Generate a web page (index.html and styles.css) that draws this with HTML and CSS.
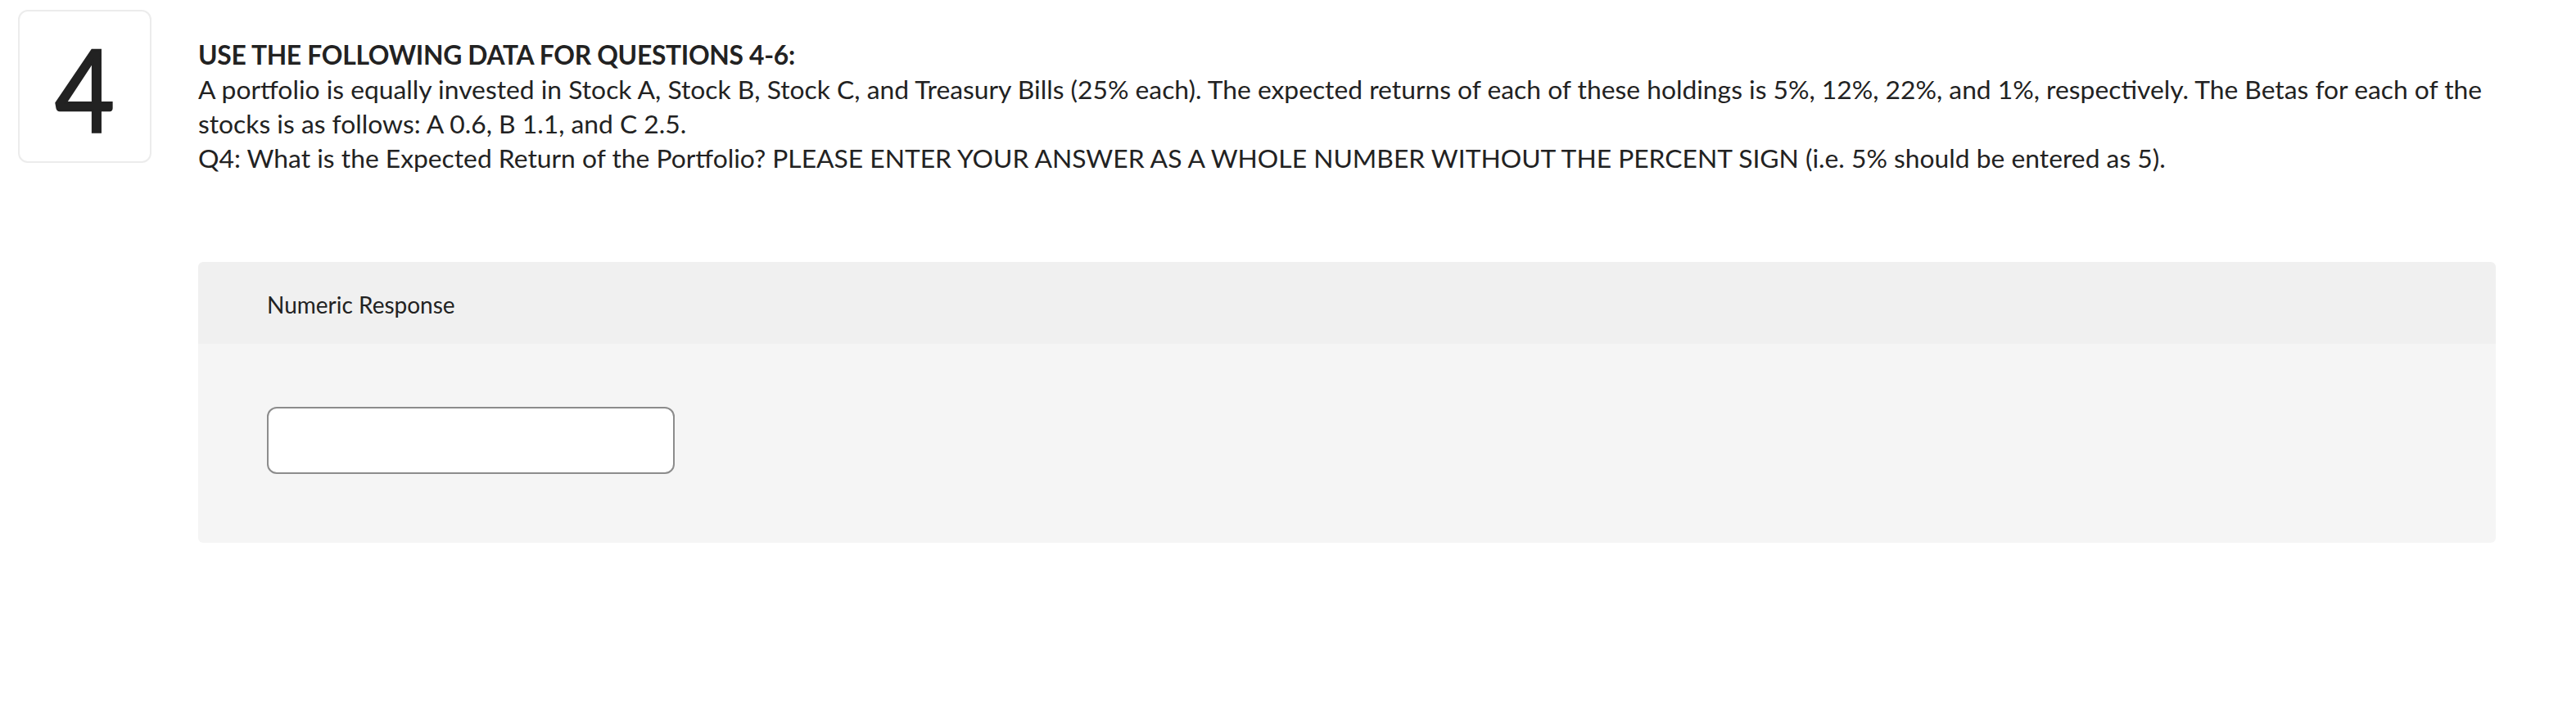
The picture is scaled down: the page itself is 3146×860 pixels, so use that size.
FILE: index.html
```html
<!DOCTYPE html>
<html lang="en">
<head>
<meta charset="utf-8">
<title>Question 4</title>
<link rel="stylesheet" href="styles.css">
</head>
<body>
<div class="question">
  <div class="qnum"><span>4</span></div>
  <div class="qmain">
    <div class="prompt">
      <div class="lead">USE THE FOLLOWING DATA FOR QUESTIONS 4-6:</div>
      <div class="para">A portfolio is equally invested in Stock A, Stock B, Stock C, and Treasury Bills (25% each). The expected returns of each of these holdings is 5%, 12%, 22%, and 1%, respectively. The Betas for each of the stocks is as follows: A 0.6, B 1.1, and C 2.5.</div>
      <div class="para">Q4: What is the Expected Return of the Portfolio? PLEASE ENTER YOUR ANSWER AS A WHOLE NUMBER WITHOUT THE PERCENT SIGN (i.e. 5% should be entered as 5).</div>
    </div>
    <div class="response">
      <div class="response-head">Numeric Response</div>
      <div class="response-body">
        <input class="answer" type="text" aria-label="Numeric Response">
      </div>
    </div>
  </div>
</div>
</body>
</html>
```
FILE: styles.css
```css
html, body {
  margin: 0;
  padding: 0;
  background: #ffffff;
}
body {
  font-family: "Lato", "Liberation Sans", sans-serif;
  color: #222222;
}
.question {
  display: flex;
  align-items: flex-start;
  gap: 57px;
  padding: 12px 0 0 22px;
}
.qnum {
  box-sizing: border-box;
  width: 163px;
  height: 187px;
  flex: none;
  border: 2px solid #ececec;
  border-radius: 12px;
  display: flex;
  align-items: center;
  justify-content: center;
}
.qnum span {
  display: block;
  font-size: 140px;
  font-weight: 400;
  line-height: 1;
  color: #222222;
  -webkit-text-stroke: 2.5px #222222;
  transform: scaleX(0.9);
  position: relative;
  top: 1px;
}
.qmain {
  width: 2806px;
  flex: none;
  padding-top: 34px;
}
.prompt {
  font-size: 31.8px;
  line-height: 42px;
}
.lead {
  font-weight: 700;
  letter-spacing: -0.3px;
}
.response {
  margin-top: 106px;
  border-radius: 6px;
  overflow: hidden;
}
.response-head {
  box-sizing: border-box;
  height: 100px;
  background: #f0f0f0;
  display: flex;
  align-items: center;
  padding-left: 84px;
  padding-top: 4px;
  font-size: 28px;
  color: #222222;
}
.response-body {
  box-sizing: border-box;
  height: 243px;
  background: #f5f5f5;
  padding: 77px 84px 84px 84px;
}
.answer {
  display: block;
  box-sizing: border-box;
  width: 498px;
  height: 82px;
  margin: 0;
  border: 2px solid #8c8c8c;
  border-radius: 12px;
  background: #ffffff;
  font-family: "Lato", "Liberation Sans", sans-serif;
  font-size: 28px;
  padding: 0 16px;
  outline: none;
}
```
